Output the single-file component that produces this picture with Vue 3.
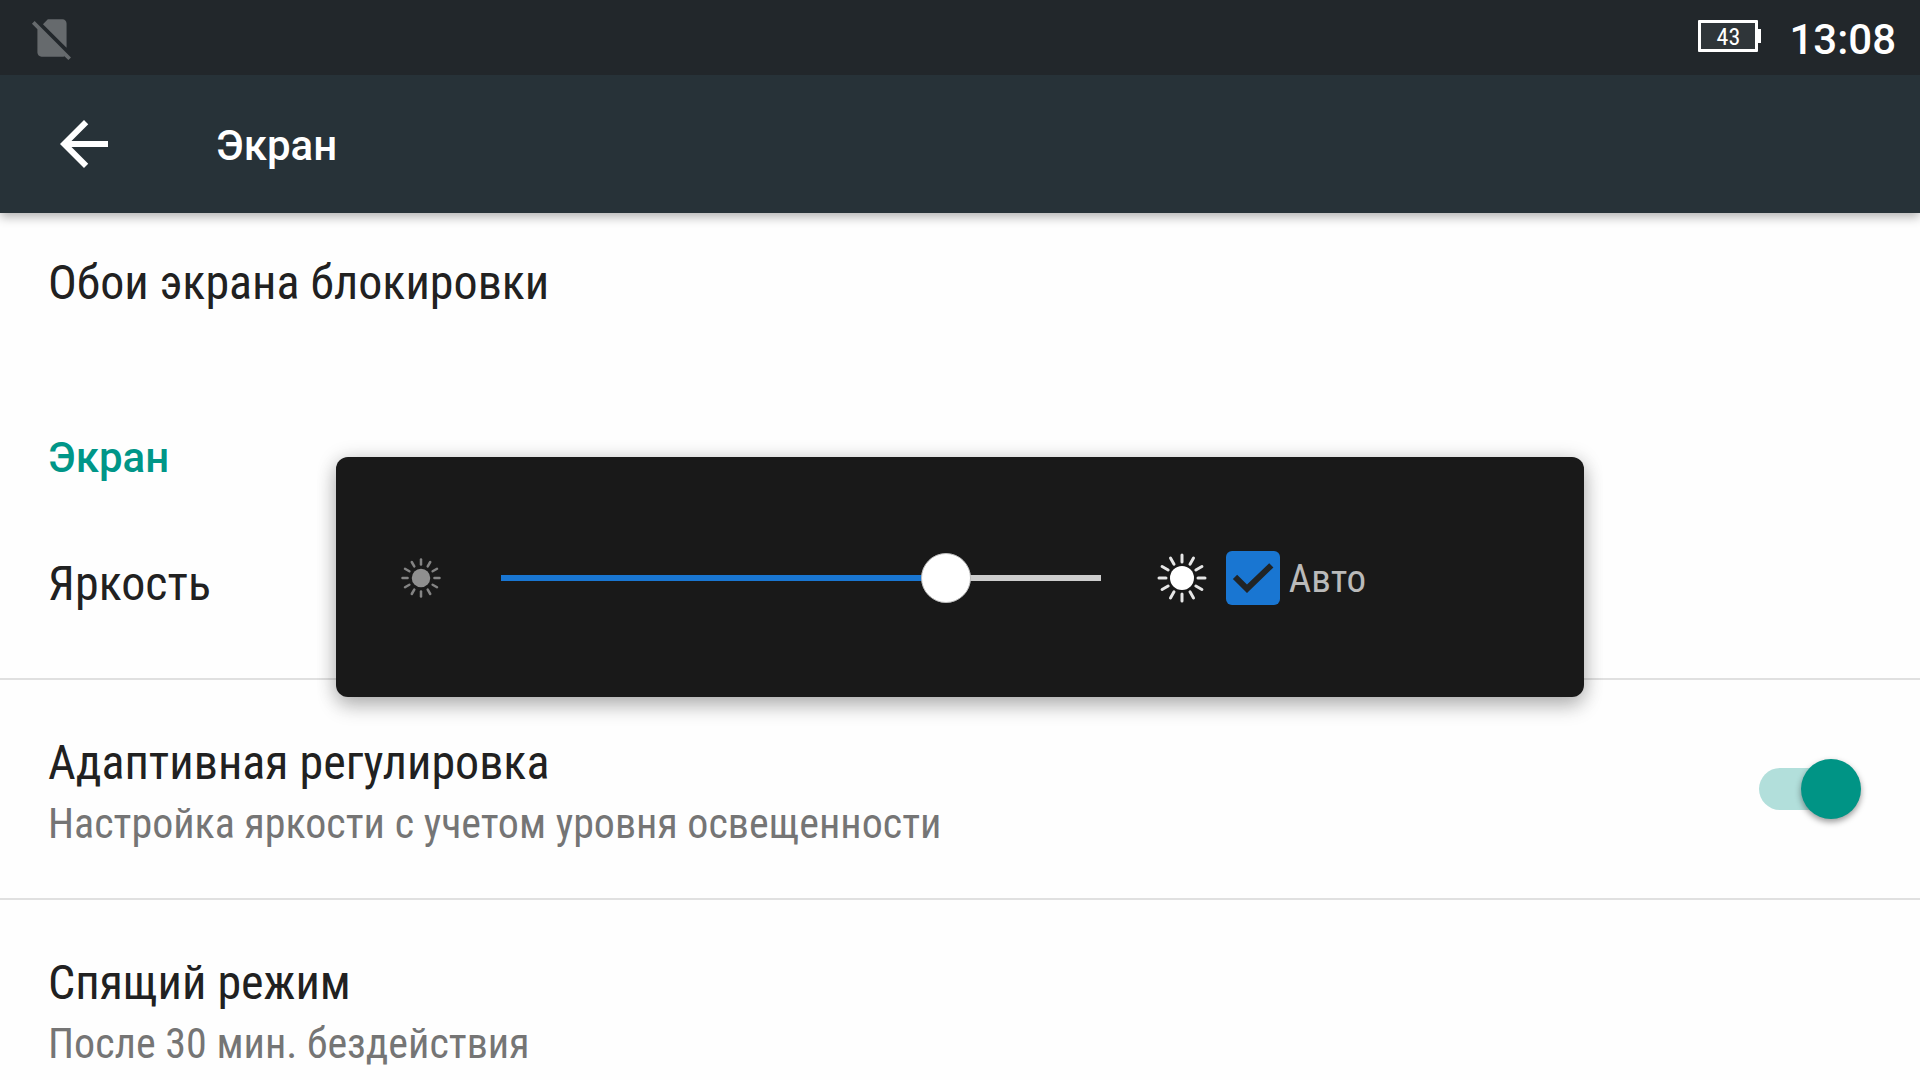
<template>
  <div class="screen">
    <header class="top">
      <div class="status-bar">
        <svg class="sim-icon" viewBox="0 0 24 24" aria-hidden="true">
          <path
            d="M18.99 5c0-1.1-.89-2-1.99-2h-7L7.66 5.34 19 16.68 18.99 5zM3.65 3.88L2.38 5.15 5 7.77V19c0 1.1.9 2 2 2h10.01c.35 0 .67-.1.96-.26l1.88 1.88 1.27-1.27L3.65 3.88z"
          />
        </svg>
        <div class="status-right">
          <div class="battery">
            <span class="battery-level">{{ battery }}</span>
            <span class="battery-tip"></span>
          </div>
          <span class="clock">13:08</span>
        </div>
      </div>

      <div class="app-bar">
        <button class="back" type="button" aria-label="Назад">
          <svg viewBox="0 0 24 24" aria-hidden="true">
            <path d="M20 11H7.83l5.59-5.59L12 4l-8 8 8 8 1.41-1.41L7.83 13H20v-2z" />
          </svg>
        </button>
        <h1 class="app-title">Экран</h1>
      </div>
    </header>

    <main class="list">
      <div class="row row--last">
        <div class="row-text">
          <span class="row-title">Обои экрана блокировки</span>
        </div>
      </div>

      <h2 class="category">Экран</h2>

      <div class="row">
        <div class="row-text">
          <span class="row-title">Яркость</span>
        </div>
      </div>

      <label class="row" for="adaptive">
        <span class="row-text">
          <span class="row-title">Адаптивная регулировка</span>
          <span class="row-summary">Настройка яркости с учетом уровня освещенности</span>
        </span>
        <input id="adaptive" v-model="adaptive" class="switch" type="checkbox" role="switch" />
      </label>

      <div class="row">
        <div class="row-text">
          <span class="row-title">Спящий режим</span>
          <span class="row-summary">После 30 мин. бездействия</span>
        </div>
      </div>
    </main>

    <div class="dialog-layer">
      <div class="dialog" role="dialog" aria-label="Яркость">
        <svg class="sun sun--dim" viewBox="-25 -25 50 50" aria-hidden="true">
          <circle r="11" />
          <line v-for="angle in rays" :key="angle" y1="-16" y2="-22" :transform="`rotate(${angle})`" />
        </svg>

        <input
          v-model.number="brightness"
          class="slider"
          type="range"
          min="0"
          :max="MAX_BRIGHTNESS"
          aria-label="Яркость"
          :style="{ '--ratio': brightness / MAX_BRIGHTNESS }"
        />

        <svg class="sun sun--bright" viewBox="-25 -25 50 50" aria-hidden="true">
          <circle r="12" />
          <line v-for="angle in rays" :key="angle" y1="-16" y2="-23" :transform="`rotate(${angle})`" />
        </svg>

        <label class="auto">
          <span class="check">
            <input v-model="auto" class="check-input" type="checkbox" />
            <svg v-if="auto" class="check-mark" viewBox="0 0 18 18" aria-hidden="true">
              <path d="M7 14l-4.7-4.7 1.41-1.41L7 11.17l7.4-7.1 1.41 1.41z" />
            </svg>
          </span>
          <span class="auto-text">Авто</span>
        </label>
      </div>
    </div>
  </div>
</template>

<script setup>
import { ref } from "vue";

const MAX_BRIGHTNESS = 255;
const rays = Array.from({ length: 12 }, (_, i) => i * 30);

const battery = ref(43);
const brightness = ref(195);
const auto = ref(true);
const adaptive = ref(true);
</script>

<style>
body {
  margin: 0;
  background: #fefefe;
}
</style>

<style scoped>
.screen {
  position: relative;
  height: 100vh;
  overflow: hidden;
  display: flex;
  flex-direction: column;
  font-family: "Roboto Condensed", Roboto, sans-serif;
  color: #212121;
}

.top {
  position: relative;
  z-index: 1;
  flex: none;
  background: #273238;
  color: #fff;
  font-family: Roboto, sans-serif;
  font-weight: 500;
  box-shadow: 0 4px 10px rgba(0, 0, 0, 0.3);
}

.status-bar {
  display: flex;
  align-items: center;
  justify-content: space-between;
  height: 75px;
  padding: 0 24px 0 27px;
  background: #22272b;
}

.sim-icon {
  width: 50px;
  height: 50px;
  fill: #666a6d;
}

.status-right {
  display: flex;
  align-items: center;
  gap: 28px;
}

.battery {
  display: flex;
  align-items: center;
  margin-bottom: 3px;
}

.battery-level {
  box-sizing: border-box;
  width: 60px;
  height: 32px;
  border: 3px solid #fff;
  border-radius: 1px;
  background: #2f3539;
  font-family: "Roboto Condensed", Roboto, sans-serif;
  font-size: 24px;
  font-weight: 400;
  line-height: 28px;
  text-align: center;
}

.battery-tip {
  width: 3px;
  height: 14px;
  background: #fff;
}

.clock {
  padding-top: 4px;
  font-size: 42px;
  line-height: 50px;
}

.app-bar {
  display: flex;
  align-items: center;
  gap: 96px;
  height: 138px;
  padding: 0 48px;
}

.back {
  width: 72px;
  height: 72px;
  padding: 0;
  border: 0;
  background: none;
}

.back svg {
  display: block;
  width: 72px;
  height: 72px;
  fill: #fff;
}

.app-title {
  margin: 0;
  padding-top: 4px;
  font-size: 42px;
  font-weight: 500;
  line-height: 50px;
}

/* list is scrolled slightly under the app bar */
.list {
  margin-top: -13px;
}

.row {
  box-sizing: border-box;
  display: flex;
  align-items: center;
  justify-content: space-between;
  min-height: 179px;
  padding: 0 59px 0 48px;
  border-bottom: 2px solid #e0e0e0;
}

.row--last {
  border-bottom: 0;
}

.row-text {
  align-self: flex-start;
  display: flex;
  flex-direction: column;
  padding: 51px 0 45px;
}

.row-title {
  font-size: 48px;
  line-height: 64px;
}

.row-summary {
  font-size: 42px;
  line-height: 58px;
  color: #757575;
}

.category {
  margin: 0;
  padding: 54px 48px 18px;
  font-family: Roboto, sans-serif;
  font-size: 42px;
  font-weight: 500;
  line-height: 50px;
  color: #009688;
}

.switch {
  appearance: none;
  display: flex;
  align-items: center;
  flex: none;
  width: 102px;
  height: 60px;
  margin: 0;
}

.switch::before {
  content: "";
  width: 100px;
  height: 42px;
  border-radius: 21px;
  background: #bdbdbd;
}

.switch::after {
  content: "";
  width: 60px;
  height: 60px;
  margin-left: -100px;
  border-radius: 50%;
  background: #f5f5f5;
  box-shadow: 0 3px 6px rgba(0, 0, 0, 0.4);
}

.switch:checked::before {
  background: #b2dfdb;
}

.switch:checked::after {
  margin-left: -58px;
  background: #009485;
}

.dialog-layer {
  position: absolute;
  inset: 74px 0 0;
  z-index: 2;
  display: flex;
  align-items: center;
  justify-content: center;
}

.dialog {
  box-sizing: border-box;
  display: flex;
  align-items: center;
  width: 65%;
  height: 240px;
  padding: 2px 218px 0 64px;
  border-radius: 12px;
  background: #191919;
  box-shadow:
    0 10px 20px rgba(0, 0, 0, 0.2),
    0 2px 20px rgba(0, 0, 0, 0.2);
}

.sun {
  flex: none;
  stroke-linecap: round;
}

.sun--dim {
  width: 42px;
  height: 42px;
  fill: #8f8f8f;
  stroke: #848484;
}

.sun--bright {
  width: 50px;
  height: 50px;
  fill: #fff;
  stroke: #e6e6e6;
}

.sun circle {
  stroke: none;
}

.sun line {
  stroke-width: 3;
}

.slider {
  appearance: none;
  flex: 1;
  min-width: 0;
  height: 50px;
  margin: 0 56px 0 59px;
  background: none;
}

.slider::-webkit-slider-runnable-track {
  --fill: calc(25px + (100% - 50px) * var(--ratio));
  height: 6px;
  background: linear-gradient(90deg, #1976d2 var(--fill), #cdcdcd var(--fill));
}

.slider::-webkit-slider-thumb {
  appearance: none;
  width: 50px;
  height: 50px;
  margin-top: -22px;
  border: 1px solid #bdbdbd;
  border-radius: 50%;
  background: #fff;
}

.auto {
  display: flex;
  align-items: center;
  gap: 9px;
  margin-left: 19px;
  font-size: 39px;
  line-height: 50px;
  color: #bababa;
}

.auto-text {
  padding-top: 2px;
}

.check {
  display: grid;
}

.check-input,
.check-mark {
  grid-area: 1 / 1;
  width: 54px;
  height: 54px;
}

.check-input {
  appearance: none;
  margin: 0;
  border: 6px solid #bababa;
  border-radius: 6px;
}

.check-input:checked {
  border: 0;
  background: #1976d2;
}

.check-mark {
  fill: #212425;
  pointer-events: none;
}
</style>
